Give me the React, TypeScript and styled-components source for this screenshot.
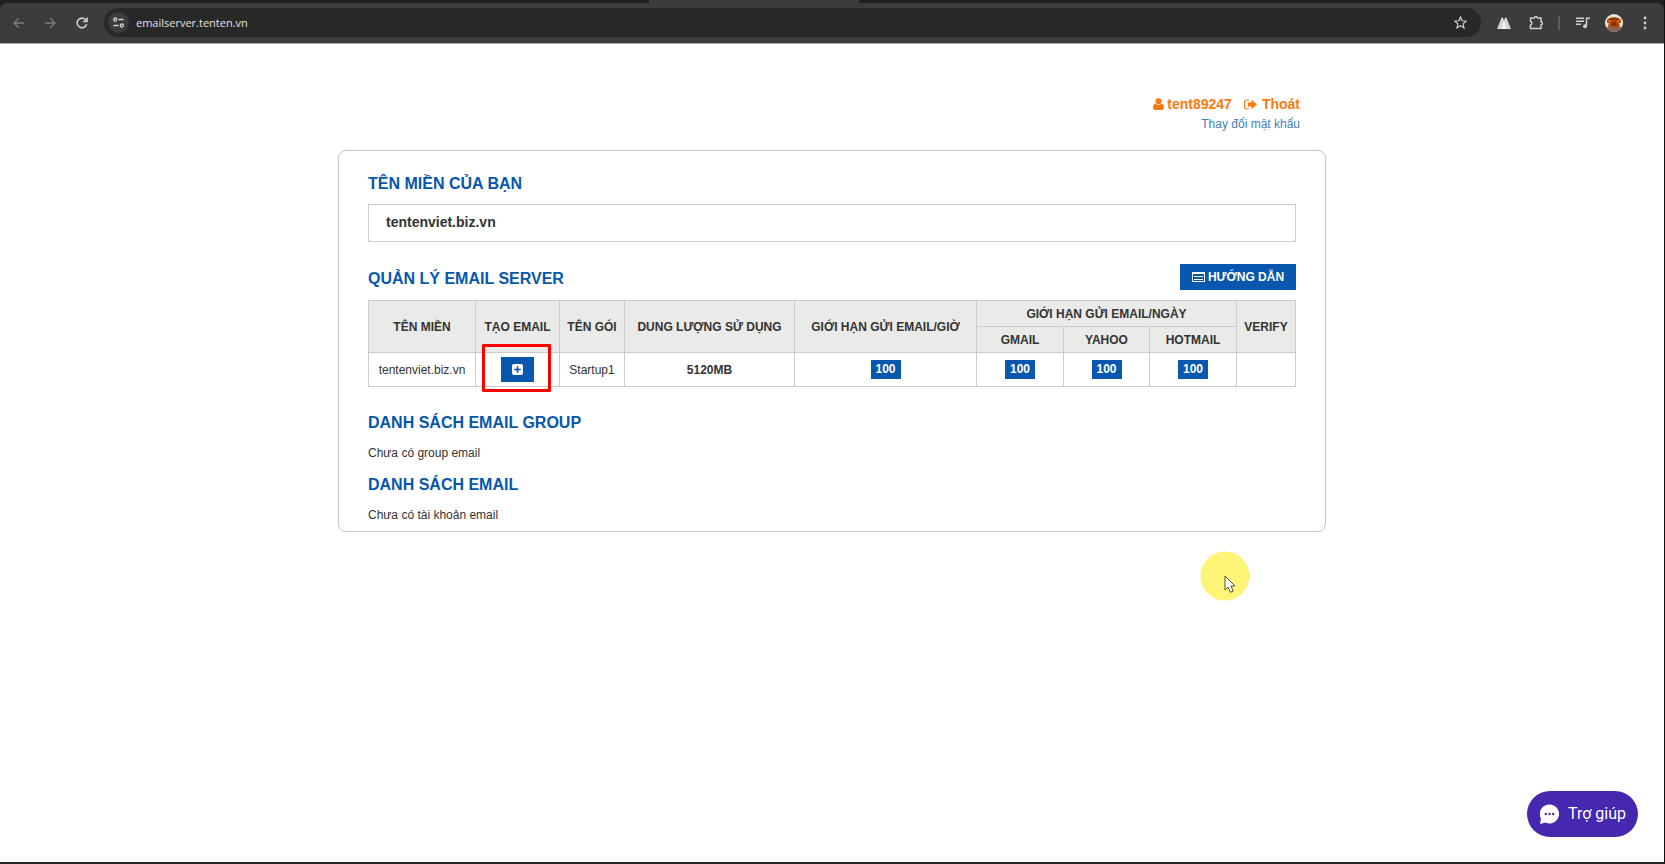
import React from 'react';
import styled, { createGlobalStyle } from 'styled-components';

const BLUE = '#0657ad';
const LINE = '#cbcbcb';

const GlobalStyle = createGlobalStyle`
  * { box-sizing: border-box; }
  html, body, #root { height: 100%; }
  body {
    margin: 0;
    background: #fff;
    color: #333;
    font: 12px/16px "Liberation Sans", Arial, sans-serif;
  }
  button, input { font: inherit; }
`;

const Shell = styled.div`
  position: relative;
  min-height: 100%;
  display: flex;
  flex-direction: column;
  border-right: 1px solid #111;
  border-bottom: 2px solid #2b2820;
`;

/* Browser chrome */
const TabStrip = styled.div`
  display: flex;
  justify-content: center;
  height: 3px;
  padding-right: 156px;
  background: #1f1f1f;
`;

const ActiveTab = styled.div`
  width: 210px;
  background: #3c3c3c;
`;

const StripBack = styled.div`
  background: #1f1f1f;
`;

const Toolbar = styled.header`
  display: flex;
  align-items: center;
  height: 41px;
  padding: 0 4px 1px 6px;
  background: #3c3c3c;
  border-bottom: 1px solid #a9a5a5;
  border-radius: 6px 6px 0 0;
`;

const NavButton = styled.button<{ $dim?: boolean; $width?: number }>`
  display: flex;
  align-items: center;
  justify-content: center;
  width: ${(p) => p.$width ?? 31}px;
  height: 28px;
  padding: 0;
  border: 0;
  background: none;
  color: ${(p) => (p.$dim ? '#7d7d7d' : '#cfcfcf')};
`;

const AddressBar = styled.div`
  flex: 1;
  display: flex;
  align-items: center;
  height: 29px;
  margin: 0 8px;
  padding: 0 6px 0 4px;
  border-radius: 15px;
  background: #282828;
`;

const SiteInfo = styled.button`
  display: flex;
  align-items: center;
  justify-content: center;
  width: 21px;
  height: 21px;
  padding: 0;
  border: 0;
  border-radius: 50%;
  background: #3c3c3c;
  color: #d6d6d6;
`;

const Url = styled.input`
  flex: 1;
  min-width: 0;
  margin-left: 7px;
  padding: 0;
  border: 0;
  outline: 0;
  background: none;
  color: #e3e3e3;
  font: 11px/16px "Open Sans", "Noto Sans", sans-serif;
`;

const Divider = styled.span`
  width: 2px;
  height: 14px;
  margin: 0 7px 0 5px;
  background: #5c5c5c;
`;

/* Page */
const Page = styled.main`
  flex: 1;
  width: 100%;
  max-width: 988px;
  margin: 0 auto;
  padding-top: 50px;
`;

const Account = styled.nav`
  display: flex;
  flex-direction: column;
  align-items: flex-end;
  padding-right: 26px;
`;

const AccountRow = styled.div`
  display: flex;
  gap: 12px;
  height: 20px;
`;

const AccountLink = styled.a<{ $gap: number }>`
  display: flex;
  align-items: center;
  gap: ${(p) => p.$gap}px;
  color: #fb790f;
  font-size: 14px;
  font-weight: bold;
  text-decoration: none;
`;

const PasswordLink = styled.a`
  color: #4280bd;
  line-height: 20px;
  text-decoration: none;
`;

const Card = styled.section`
  margin-top: 16px;
  padding: 23px 29px 8px;
  border: 1px solid #c8c8c8;
  border-radius: 8px;
`;

const Heading = styled.h2`
  margin: 0;
  color: ${BLUE};
  font-size: 16px;
  line-height: 20px;
`;

const DomainField = styled.input`
  display: block;
  width: 100%;
  height: 38px;
  margin-top: 10px;
  padding: 0 17px 2px;
  border: 1px solid ${LINE};
  outline: 0;
  color: #333;
  font-size: 14px;
  font-weight: bold;
`;

const SectionBar = styled.div`
  display: flex;
  align-items: center;
  justify-content: space-between;
  margin: 22px 0 10px;

  ${Heading} {
    padding-top: 4px;
  }
`;

const GuideButton = styled.button`
  display: flex;
  align-items: center;
  justify-content: center;
  gap: 3px;
  width: 116px;
  height: 26px;
  padding: 0;
  border: 0;
  background: ${BLUE};
  color: #fff;
  font-weight: bold;
`;

const Table = styled.table`
  width: calc(100% - 1px);
  table-layout: fixed;
  border-collapse: collapse;
  text-align: center;
`;

const Column = styled.col<{ $width: number }>`
  width: ${(p) => p.$width}px;
`;

const Th = styled.th`
  height: 26px;
  padding: 0;
  border: 1px solid ${LINE};
  background: #eaeae8;
  white-space: nowrap;
`;

const Td = styled.td`
  position: relative;
  height: 34px;
  padding: 0;
  border: 1px solid ${LINE};
`;

const AddButton = styled.button`
  display: inline-flex;
  align-items: center;
  justify-content: center;
  width: 33px;
  height: 25px;
  padding: 0;
  border: 0;
  background: ${BLUE};
  vertical-align: middle;
`;

const Highlight = styled.span`
  position: absolute;
  inset: -9px 8px -6px 6px;
  border: 3px solid #fe0000;
  border-radius: 1px;
  pointer-events: none;
`;

const Badge = styled.span`
  display: inline-block;
  width: 30px;
  background: ${BLUE};
  color: #fff;
  font-weight: bold;
  line-height: 19px;
  vertical-align: middle;
`;

const ListSection = styled.section<{ $top: number }>`
  margin-top: ${(p) => p.$top}px;
`;

const Empty = styled.p`
  margin: 12px 0 0;
`;

const HelpButton = styled.button`
  position: fixed;
  right: 27px;
  bottom: 27px;
  display: flex;
  align-items: center;
  gap: 9px;
  height: 46px;
  padding: 0 12px 0 13px;
  border: 0;
  border-radius: 23px;
  background: #4527b0;
  color: #fff;
  font: 16px/20px Roboto, sans-serif;
`;

const Pointer = styled.svg`
  position: absolute;
  left: 1200px;
  top: 551px;
  pointer-events: none;
`;

const columns = [107, 84, 65, 170, 182, 87, 86, 87, 59];
const dailyLimits = [
  { provider: 'GMAIL', limit: 100 },
  { provider: 'YAHOO', limit: 100 },
  { provider: 'HOTMAIL', limit: 100 },
];

const Arrow = ({ flip }: { flip?: boolean }) => (
  <svg width="12" height="12" viewBox="0 0 12 12" fill="none" stroke="currentColor" strokeWidth="1.3">
    <path d={flip ? 'M1 6h10M6.2 1.2 11 6l-4.8 4.8' : 'M11 6H1M5.8 1.2 1 6l4.8 4.8'} />
  </svg>
);

const BrowserBar = () => (
  <>
    <TabStrip><ActiveTab /></TabStrip>
    <StripBack>
      <Toolbar>
        <NavButton aria-label="Back" $dim $width={26}><Arrow /></NavButton>
        <NavButton aria-label="Forward" $dim $width={36}><Arrow flip /></NavButton>
        <NavButton aria-label="Reload" $width={28}>
          <svg width="12" height="12" viewBox="0 0 12 12" fill="none" stroke="currentColor" strokeWidth="1.6">
            <path d="M10.6 7.2A4.8 4.8 0 1 1 9.4 2.6L10.8 4" />
            <path d="M11 .5v4H7" />
          </svg>
        </NavButton>
        <AddressBar>
          <SiteInfo aria-label="Site information">
            <svg width="11" height="11" viewBox="0 0 11 11" fill="none" stroke="currentColor" strokeWidth="1.3">
              <circle cx="2.2" cy="2.5" r="1.5" />
              <path d="M5.5 2.5H10.5M.5 8.5h5" />
              <circle cx="8.8" cy="8.5" r="1.5" />
            </svg>
          </SiteInfo>
          <Url aria-label="Address" readOnly value="emailserver.tenten.vn" />
          <NavButton aria-label="Bookmark" $width={29}>
            <svg width="13" height="13" viewBox="0 0 13 13" fill="none" stroke="currentColor" strokeWidth="1.2">
              <path d="m6.5 1 1.6 3.8 4.1.4-3.1 2.7.9 4-3.5-2.1L3 11.9l.9-4L.8 5.2l4.1-.4z" />
            </svg>
          </NavButton>
        </AddressBar>
        <NavButton aria-label="Extension" $width={30}>
          <svg width="14" height="12" viewBox="0 0 14 12">
            <path d="M0 12 4.6.5h1.2L7 3.5 8.2.5h1.2L14 12z" fill="#d2d2d2" />
            <path d="m7 3.5 3 8.5H4z" fill="#f4f4f4" />
          </svg>
        </NavButton>
        <NavButton aria-label="Extensions" $width={34}>
          <svg width="15" height="15" viewBox="0 0 15 15" fill="none" stroke="currentColor" strokeWidth="1.5" strokeLinejoin="round">
            <path d="M1.5 3H5.5a1.4 1.4 0 0 1 2.8 0H12v4a1.4 1.4 0 0 1 0 2.8V13.5H1.5V10a1.8 1.8 0 0 0 0-3.5z" />
          </svg>
        </NavButton>
        <Divider />
        <NavButton aria-label="Media controls">
          <svg width="14" height="12" viewBox="0 0 14 12" fill="none" stroke="currentColor" strokeWidth="1.5">
            <path d="M0 1.2h8M0 4.2h8M0 7.2h5M10.5 9V1.2H14" />
            <circle cx="9" cy="9.3" r="2" fill="currentColor" stroke="none" />
          </svg>
        </NavButton>
        <NavButton aria-label="Profile">
          <svg width="18" height="18" viewBox="0 0 18 18">
            <circle cx="9" cy="9" r="9" fill="#e3e8cd" />
            <path d="M1 13h16a9 9 0 0 1-16 0z" fill="#8d6259" />
            <path d="M2 7c0-5 14-5 14 0v2h-2l1 4H3l1-4H2z" fill="#b84708" />
            <path d="M4 6.5c1-2 9-2 10 0M7 9h4M6.5 11h5" fill="none" stroke="#5d1c08" strokeWidth="1" />
            <path d="M3 7h3M12 7h3" stroke="#e8832e" />
          </svg>
        </NavButton>
        <NavButton aria-label="Menu">
          <svg width="4" height="14" viewBox="0 0 4 14" fill="currentColor">
            <circle cx="2" cy="2" r="1.4" /><circle cx="2" cy="7" r="1.4" /><circle cx="2" cy="12" r="1.4" />
          </svg>
        </NavButton>
      </Toolbar>
    </StripBack>
  </>
);

const ServerTable = () => (
  <Table>
    <colgroup>{columns.map((w, i) => <Column key={i} $width={w} />)}</colgroup>
    <thead>
      <tr>
        <Th rowSpan={2}>TÊN MIỀN</Th>
        <Th rowSpan={2}>TẠO EMAIL</Th>
        <Th rowSpan={2}>TÊN GÓI</Th>
        <Th rowSpan={2}>DUNG LƯỢNG SỬ DỤNG</Th>
        <Th rowSpan={2}>GIỚI HẠN GỬI EMAIL/GIỜ</Th>
        <Th colSpan={3}>GIỚI HẠN GỬI EMAIL/NGÀY</Th>
        <Th rowSpan={2}>VERIFY</Th>
      </tr>
      <tr>{dailyLimits.map((d) => <Th key={d.provider}>{d.provider}</Th>)}</tr>
    </thead>
    <tbody>
      <tr>
        <Td>tentenviet.biz.vn</Td>
        <Td>
          <AddButton aria-label="Tạo email">
            <svg width="11" height="11" viewBox="0 0 11 11">
              <rect width="11" height="11" rx="2" fill="#fff" />
              <path d="M5.5 2.2v6.6M2.2 5.5h6.6" stroke={BLUE} strokeWidth="1.6" />
            </svg>
          </AddButton>
          <Highlight />
        </Td>
        <Td>Startup1</Td>
        <Td><strong>5120MB</strong></Td>
        <Td><Badge>100</Badge></Td>
        {dailyLimits.map((d) => <Td key={d.provider}><Badge>{d.limit}</Badge></Td>)}
        <Td />
      </tr>
    </tbody>
  </Table>
);

export default function App() {
  return (
    <Shell>
      <GlobalStyle />
      <BrowserBar />
      <Page>
        <Account>
          <AccountRow>
            <AccountLink href="#account" $gap={3}>
              <svg width="11" height="12" viewBox="0 0 11 12" fill="currentColor">
                <circle cx="5.5" cy="3.2" r="3" />
                <path d="M2.6 5.5C.8 5.8 0 7.5 0 9.6 0 11 .8 12 2 12h7c1.2 0 2-1 2-2.4 0-2.1-.8-3.8-2.6-4.1a4 4 0 0 1-5.8 0z" />
              </svg>
              tent89247
            </AccountLink>
            <AccountLink href="#logout" $gap={5}>
              <svg width="13" height="11" viewBox="0 0 13 11" fill="currentColor">
                <path d="M5 1H2.5A2 2 0 0 0 .6 3v5a2 2 0 0 0 1.9 2H5" fill="none" stroke="currentColor" strokeWidth="1.2" />
                <path d="M4 3.6h3.5V.8L13 5.5 7.5 10.2V7.4H4z" />
              </svg>
              Thoát
            </AccountLink>
          </AccountRow>
          <PasswordLink href="#password">Thay đổi mật khẩu</PasswordLink>
        </Account>
        <Card>
          <Heading><label htmlFor="domain">TÊN MIỀN CỦA BẠN</label></Heading>
          <DomainField id="domain" readOnly value="tentenviet.biz.vn" />
          <SectionBar>
            <Heading>QUẢN LÝ EMAIL SERVER</Heading>
            <GuideButton>
              <svg width="13" height="10" viewBox="0 0 13 10" fill="none" stroke="#fff">
                <rect x=".5" y=".5" width="12" height="9" />
                <path d="M1 1.5h11M2 4.5h9M2 7.5h9" />
              </svg>
              HƯỚNG DẪN
            </GuideButton>
          </SectionBar>
          <ServerTable />
          <ListSection $top={26}>
            <Heading>DANH SÁCH EMAIL GROUP</Heading>
            <Empty>Chưa có group email</Empty>
          </ListSection>
          <ListSection $top={14}>
            <Heading>DANH SÁCH EMAIL</Heading>
            <Empty>Chưa có tài khoản email</Empty>
          </ListSection>
        </Card>
      </Page>
      <HelpButton>
        <svg width="19" height="20" viewBox="0 0 19 20">
          <path d="M9.5.5a9.5 9.5 0 1 1-4 18.1L0 20l1-5.4A9.5 9.5 0 0 1 9.5.5z" fill="#fff" />
          <g fill="#4527b0"><circle cx="5.8" cy="10" r="1.2" /><circle cx="9.5" cy="10" r="1.2" /><circle cx="13.2" cy="10" r="1.2" /></g>
        </svg>
        Trợ giúp
      </HelpButton>
      <Pointer width="50" height="50" viewBox="0 0 50 50">
        <circle cx="25" cy="25" r="24.5" fill="#fef478" />
        <path d="M25 25v14l3-3 2.5 5.3 2.7-1.2L31 35h4z" fill="#fff" stroke="#554f30" strokeLinejoin="round" />
      </Pointer>
    </Shell>
  );
}
